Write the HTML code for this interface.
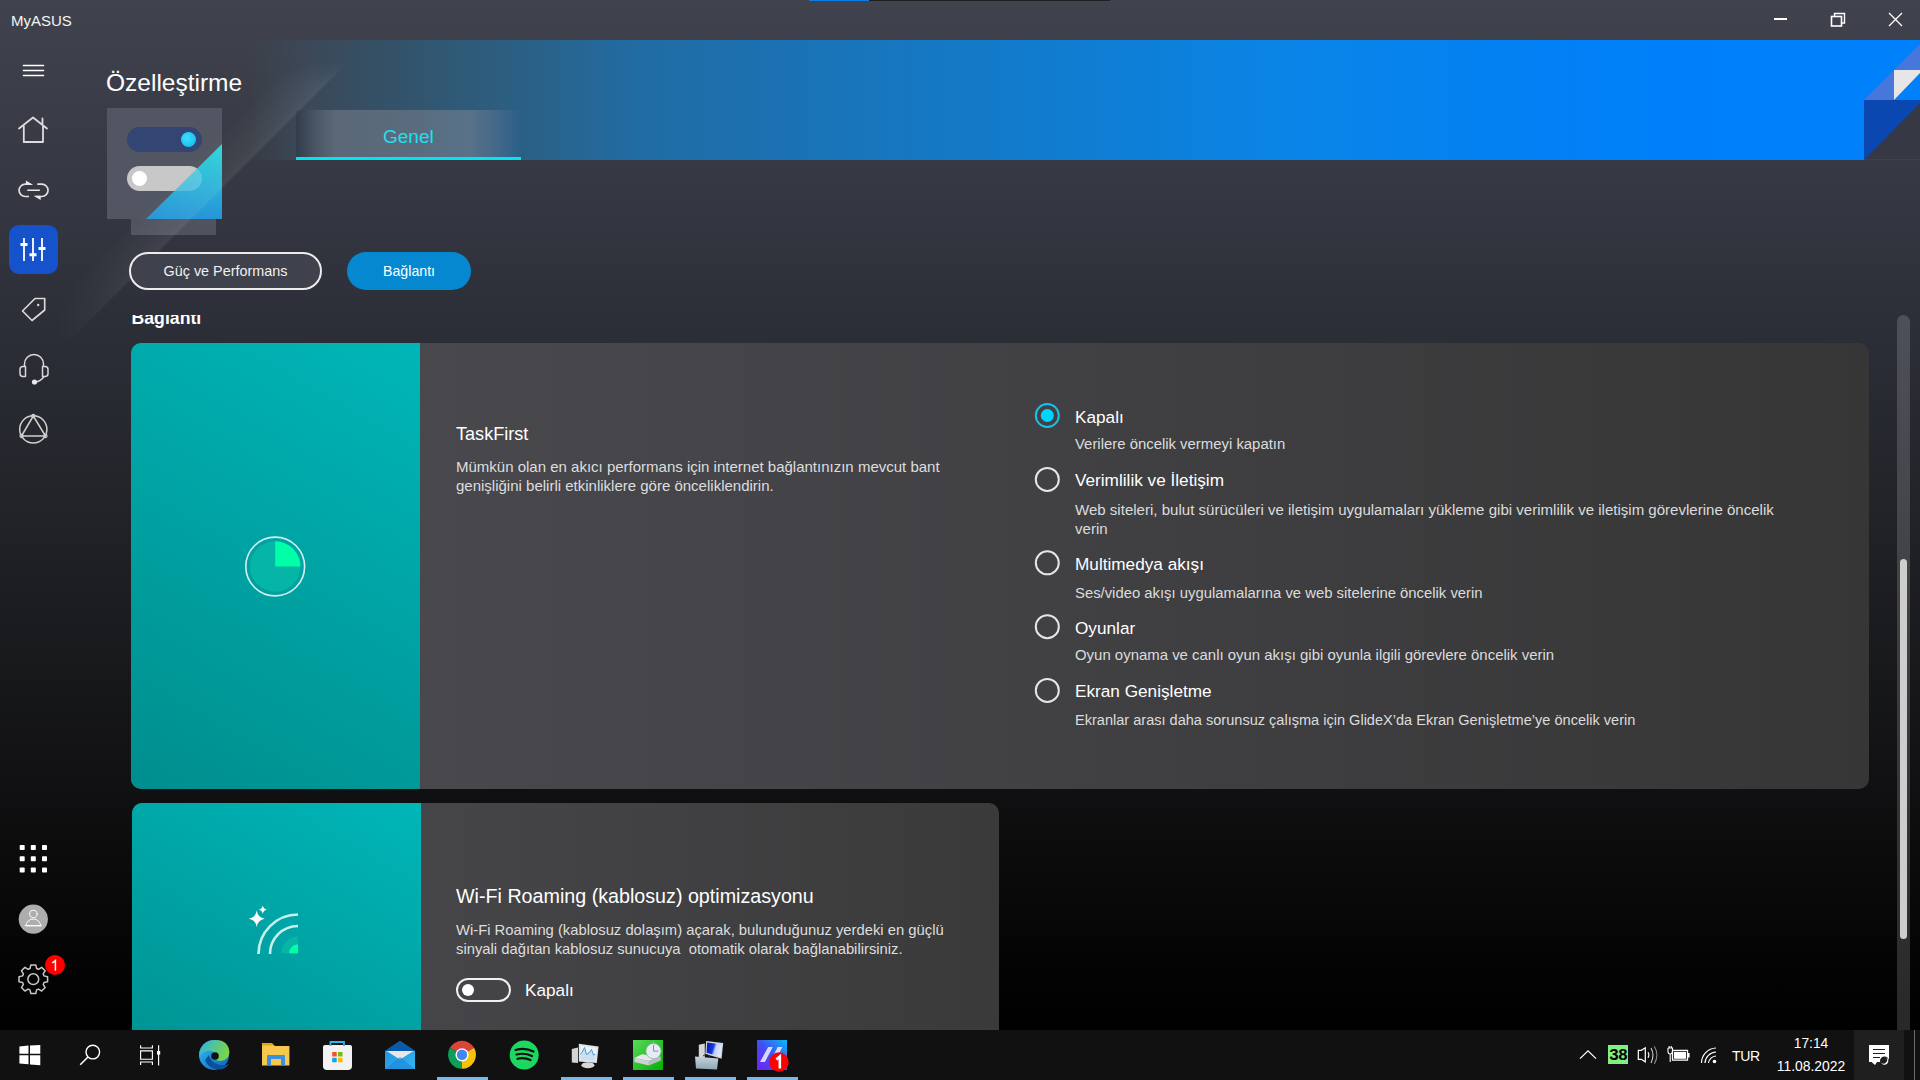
<!DOCTYPE html>
<html><head><meta charset="utf-8">
<style>
*{box-sizing:border-box;margin:0;padding:0}
html,body{width:1920px;height:1080px;overflow:hidden}
body{position:relative;font-family:"Liberation Sans",sans-serif;color:#fff;background:linear-gradient(180deg,#40434d 0px,#363943 180px,#2c2f38 320px,#1f2024 560px,#050505 950px,#000 1030px)}
.a{position:absolute}
.t{position:absolute;white-space:nowrap;line-height:1}
svg{position:absolute;overflow:visible}
</style></head><body>

<!-- top indicator -->
<div class="a" style="left:809px;top:0;width:60px;height:1.2px;background:#0a7ee8"></div>
<div class="a" style="left:869px;top:0;width:241px;height:1.2px;background:#1e1f22"></div>

<!-- title bar -->
<div class="t" style="left:11px;top:13px;font-size:15px;color:#f4f4f4">MyASUS</div>
<svg style="left:0;top:0" width="1920" height="40">
  <rect x="1774" y="18" width="13" height="2" fill="#fff"/>
  <rect x="1831.5" y="16.5" width="10" height="9.5" fill="none" stroke="#fff" stroke-width="1.6"/>
  <path d="M1834.5 16.5 V13.5 H1844.5 V23 H1841.5" fill="none" stroke="#fff" stroke-width="1.4"/>
  <path d="M1889 13 L1902 26 M1902 13 L1889 26" stroke="#fff" stroke-width="1.3"/>
</svg>


<!-- banner -->
<div class="a" style="left:250px;top:40px;width:1614px;height:120px;background:linear-gradient(90deg,rgba(64,66,76,0) 0px,#3c4756 50px,#33536a 150px,#2b6084 270px,#216ca4 390px,#1479c6 710px,#0a84e6 1030px,#0180f8 1350px,#0080fa 1614px)"></div>
<svg style="left:0;top:0" width="1920" height="1080">
  <rect x="1864" y="40" width="56" height="120" fill="#0080fa"/>
  <polygon points="1864,100 1920,44 1920,70 1894,70 1894,100" fill="#4677db"/>
  <polygon points="1894,70 1920,70 1920,73 1894,100" fill="#e6e6e6"/>
  <rect x="1864" y="100" width="56" height="60" fill="#0a47b0"/>
  <polygon points="1864,160 1920,103 1920,160" fill="#363943"/>
  <rect x="1864" y="159" width="56" height="1" fill="#2a4670"/>
</svg>
<!-- genel tab -->
<div class="a" style="left:296px;top:110px;width:225px;height:50px;background:linear-gradient(90deg,#323d4b 0px,#4a5666 20px,#5a6878 39px,#5a6c7e 120px,#587288 174px,#4a6a88 194px,#2a6088 225px)"></div>
<div class="a" style="left:296px;top:157px;width:225px;height:3px;background:#00e5ef"></div>
<div class="t" style="left:383px;top:126.6px;font-size:19px;color:#19e3ef">Genel</div>
<!-- title -->
<div class="t" style="left:106px;top:71px;font-size:24.5px;color:#fff">Özelleştirme</div>
<!-- illustration -->
<div class="a" style="left:131px;top:219px;width:85px;height:16px;background:#4f535f"></div>
<div class="a" style="left:107px;top:108px;width:115px;height:111px;background:#525663"></div>
<div class="a" style="left:127px;top:127px;width:75px;height:25px;border-radius:13px;background:#334573"></div>
<div class="a" style="left:181px;top:132px;width:15px;height:15px;border-radius:50%;background:radial-gradient(circle at 40% 40%,#3ae0ff,#12b4e8)"></div>
<div class="a" style="left:127px;top:166px;width:75px;height:25px;border-radius:13px;background:#c8c8c8"></div>
<div class="a" style="left:132px;top:171px;width:15px;height:15px;border-radius:50%;background:#fff"></div>
<svg style="left:0;top:0" width="400" height="300">
  <defs><linearGradient id="ig" x1="0" y1="0" x2="0" y2="1"><stop offset="0" stop-color="#2fd8d8"/><stop offset="1" stop-color="#2694d8"/></linearGradient></defs>
  <clipPath id="tri"><polygon points="222,144 222,219 146,219"/></clipPath>
  <polygon points="222,144 222,219 146,219" fill="url(#ig)"/>
  <rect x="127" y="166" width="75" height="25" rx="12.5" fill="#fff" opacity="0.2" clip-path="url(#tri)"/>
</svg>


<!-- light streak -->
<svg style="left:0;top:0" width="420" height="420">
  <defs>
    <linearGradient id="stk" gradientUnits="userSpaceOnUse" x1="175" y1="175" x2="205" y2="205"><stop offset="0" stop-color="#fff" stop-opacity="0"/><stop offset="0.8" stop-color="#fff" stop-opacity="0.055"/><stop offset="1" stop-color="#fff" stop-opacity="0.075"/></linearGradient>
    <linearGradient id="stkm" gradientUnits="userSpaceOnUse" x1="60" y1="350" x2="140" y2="270"><stop offset="0" stop-color="#fff" stop-opacity="0"/><stop offset="1" stop-color="#fff" stop-opacity="1"/></linearGradient>
    <mask id="stkmask"><rect x="0" y="0" width="420" height="420" fill="url(#stkm)"/></mask>
    <linearGradient id="stkv" gradientUnits="userSpaceOnUse" x1="0" y1="60" x2="0" y2="84"><stop offset="0" stop-color="#fff" stop-opacity="0"/><stop offset="1" stop-color="#fff" stop-opacity="1"/></linearGradient>
    <mask id="stkmask2"><rect x="0" y="0" width="420" height="420" fill="url(#stkv)"/></mask>
  </defs>
  <g mask="url(#stkmask2)"><polygon points="50,360 350,60 290,60 50,300" fill="url(#stk)" mask="url(#stkmask)"/></g>
</svg>
<!-- sidebar -->
<svg style="left:0;top:0" width="100" height="1030" fill="none" stroke="#e6e6e6" stroke-width="1.8" stroke-linecap="round" stroke-linejoin="round">
  <path d="M23.5 65.5 H43.5 M23.5 70.5 H43.5 M23.5 75.5 H43.5" stroke="#fff" stroke-width="1.6"/>
  <path d="M19 128.5 L33 117.5 L47 128.5 M23.8 126 V142 H43 V126 M42.5 118.5 V123.5" stroke="#dcdcdc" stroke-width="1.8"/>
  <path d="M31 184.2 H25.2 A6.15 6.15 0 0 0 25.2 196.5 H29 M37.2 184.2 H41.9 A6.15 6.15 0 0 1 41.9 196.5 H36" stroke="#e0e0e0" stroke-width="1.7" stroke-linecap="butt"/>
  <path d="M27.8 190.3 H39.3" stroke="#e8e8e8" stroke-width="1.6"/>
  <path d="M25.9 180.6 L33.2 184.9 H25.9 Z M40.7 200.1 L33.4 195.8 H40.7 Z" fill="#e8e8e8" stroke="none"/>
  <rect x="9" y="225" width="49" height="49" rx="10" fill="#1652cc" stroke="none"/>
  <path d="M24 238 V261 M33 238 V261 M42 238 V261" stroke="#fff" stroke-width="1.8" stroke-linecap="butt"/>
  <path d="M20.5 244.5 H27.5 M29.5 254.8 H36.5 M38.5 248.6 H45.5" stroke="#fff" stroke-width="3" stroke-linecap="butt"/>
  <path d="M35 298.5 H44.7 V310 L32 320.5 L22.5 311 Z" stroke="#d8d8d8" stroke-width="1.7"/>
  <circle cx="38.2" cy="305" r="1.2" fill="#d8d8d8" stroke="none"/>
  <path d="M24.5 366 V364 A9.5 9.5 0 0 1 43.5 364 V366" stroke="#d8d8d8" stroke-width="1.5"/>
  <path d="M25.5 366.5 H23 A3 3 0 0 0 20 369.5 V373.5 A3 3 0 0 0 23 376.5 H25.5 Z M42.5 366.5 H45 A3 3 0 0 1 48 369.5 V373.5 A3 3 0 0 1 45 376.5 H42.5 Z" stroke="#d8d8d8" stroke-width="1.5"/>
  <path d="M44 376.5 Q41 381 36 382" stroke="#d8d8d8" stroke-width="1.5"/>
  <circle cx="34.5" cy="382" r="2.6" fill="#e8e8e8" stroke="none"/>
  <circle cx="33.3" cy="429.3" r="13.6" stroke="#d0d0d0" stroke-width="1.5"/>
  <path d="M33.3 416 L21.5 436 H45.5 Z" stroke="#d0d0d0" stroke-width="1.5"/>
  <circle cx="33.3" cy="416" r="1.6" stroke="#d0d0d0" stroke-width="1.1"/>
  <circle cx="21.5" cy="436" r="1.6" stroke="#d0d0d0" stroke-width="1.1"/>
  <circle cx="45.5" cy="436" r="1.6" stroke="#d0d0d0" stroke-width="1.1"/>
  <g fill="#fff" stroke="none">
    <rect x="19.7" y="845" width="5" height="5" rx="0.8"/><rect x="30.8" y="845" width="5" height="5" rx="0.8"/><rect x="42" y="845" width="5" height="5" rx="0.8"/>
    <rect x="19.7" y="856.3" width="5" height="5" rx="0.8"/><rect x="30.8" y="856.3" width="5" height="5" rx="0.8"/><rect x="42" y="856.3" width="5" height="5" rx="0.8"/>
    <rect x="19.7" y="867.5" width="5" height="5" rx="0.8"/><rect x="30.8" y="867.5" width="5" height="5" rx="0.8"/><rect x="42" y="867.5" width="5" height="5" rx="0.8"/>
  </g>
  <circle cx="33.3" cy="919.2" r="14.6" fill="#adadad" stroke="none"/>
  <circle cx="33.3" cy="914" r="3.8" stroke="#fafafa" stroke-width="1"/>
  <path d="M26 925.5 A7.3 6.5 0 0 1 40.6 925.5 Z" stroke="#fafafa" stroke-width="1"/>
  <path d="M25 925.5 H41.5" stroke="#fafafa" stroke-width="1"/>
  <path id="gear" stroke="#c8c8c8" stroke-width="1.5" stroke-linejoin="round" d="M44.00 975.89 L47.59 976.75 L47.59 981.65 L44.00 982.51 L43.21 984.43 L45.14 987.57 L41.67 991.04 L38.53 989.11 L36.61 989.90 L35.75 993.49 L30.85 993.49 L29.99 989.90 L28.07 989.11 L24.93 991.04 L21.46 987.57 L23.39 984.43 L22.60 982.51 L19.01 981.65 L19.01 976.75 L22.60 975.89 L23.39 973.97 L21.46 970.83 L24.93 967.36 L28.07 969.29 L29.99 968.50 L30.85 964.91 L35.75 964.91 L36.61 968.50 L38.53 969.29 L41.67 967.36 L45.14 970.83 L43.21 973.97 Z"/>
  <circle cx="33.3" cy="979.2" r="5.4" stroke="#c8c8c8" stroke-width="1.5"/>
  <circle cx="55" cy="965" r="10" fill="#f00" stroke="none"/>
</svg>
<svg style="left:0;top:0" width="100" height="1080"><path d="M52.2 963 L55.4 960.6 V970.8" fill="none" stroke="#fff" stroke-width="1.5" stroke-linejoin="miter"/></svg>


<!-- buttons -->
<div class="a" style="left:129px;top:252px;width:193px;height:38px;border:2px solid #ececec;border-radius:19px;background:#3f424c"></div>
<div class="t" style="left:163.5px;top:264px;font-size:14.4px;color:#f0f0f0">Güç ve Performans</div>
<div class="a" style="left:347px;top:252px;width:124px;height:38px;border-radius:19px;background:#0588d0"></div>
<div class="t" style="left:383px;top:264px;font-size:14.2px;color:#fff">Bağlantı</div>

<!-- scroll content -->
<div class="a" style="left:0;top:315px;width:1895px;height:715px;overflow:hidden">
  <div class="t" style="left:131.5px;top:-5px;font-size:17.7px;font-weight:bold;color:#fff">Bağlantı</div>
  <!-- card 1 -->
  <div class="a" style="left:131px;top:28px;width:1738px;height:446px;border-radius:10px;overflow:hidden;background:linear-gradient(90deg,#4b4b50 0%,#444448 40%,#363636 100%)">
    <div class="a" style="left:0;top:0;width:289px;height:446px;background:linear-gradient(210deg,#00b6b8 0%,#00a2a3 50%,#008e8e 100%)"></div>
  </div>
  <svg style="left:0;top:0" width="600" height="700">
    <circle cx="275.2" cy="251.5" r="29.4" fill="none" stroke="#d2f0f0" stroke-width="1.6"/>
    <circle cx="275.2" cy="251.5" r="25.2" fill="#05b5a6"/>
    <path d="M275.2 251.5 V226.3 A25.2 25.2 0 0 1 300.4 251.5 Z" fill="#00ffa6"/>
  </svg>
  <div class="t" style="left:456px;top:110px;font-size:18.1px;color:#fff">TaskFirst</div>
  <div class="a" style="left:456px;top:141.8px;width:520px;font-size:15px;line-height:19.5px;color:#dedede">Mümkün olan en akıcı performans için internet bağlantınızın mevcut bant genişliğini belirli etkinliklere göre önceliklendirin.</div>

  <!-- radios -->
  <svg style="left:0;top:0" width="1200" height="500">
    <circle cx="1047.3" cy="100.5" r="11.5" fill="none" stroke="#14c3f0" stroke-width="2"/>
    <circle cx="1047.3" cy="100.5" r="6.5" fill="#00d4ff"/>
    <circle cx="1047.3" cy="164.4" r="11.5" fill="none" stroke="#e6e6e6" stroke-width="2"/>
    <circle cx="1047.3" cy="247.8" r="11.5" fill="none" stroke="#e6e6e6" stroke-width="2"/>
    <circle cx="1047.3" cy="311.7" r="11.5" fill="none" stroke="#e6e6e6" stroke-width="2"/>
    <circle cx="1047.3" cy="375.4" r="11.5" fill="none" stroke="#e6e6e6" stroke-width="2"/>
  </svg>
  <div class="t" style="left:1075px;top:94px;font-size:17.2px;color:#fff">Kapalı</div>
  <div class="t" style="left:1075px;top:122.2px;font-size:14.9px;color:#dcdcdc">Verilere öncelik vermeyi kapatın</div>
  <div class="t" style="left:1075px;top:156.7px;font-size:17.2px;color:#fff">Verimlilik ve İletişim</div>
  <div class="a" style="left:1075px;top:184.8px;width:720px;font-size:15.05px;line-height:19.5px;color:#dcdcdc">Web siteleri, bulut sürücüleri ve iletişim uygulamaları yükleme gibi verimlilik ve iletişim görevlerine öncelik verin</div>
  <div class="t" style="left:1075px;top:240.7px;font-size:17.2px;color:#fff">Multimedya akışı</div>
  <div class="t" style="left:1075px;top:270.8px;font-size:14.85px;color:#dcdcdc">Ses/video akışı uygulamalarına ve web sitelerine öncelik verin</div>
  <div class="t" style="left:1075px;top:305.2px;font-size:17.2px;color:#fff">Oyunlar</div>
  <div class="t" style="left:1075px;top:333.4px;font-size:14.95px;color:#dcdcdc">Oyun oynama ve canlı oyun akışı gibi oyunla ilgili görevlere öncelik verin</div>
  <div class="t" style="left:1075px;top:368.3px;font-size:17.2px;color:#fff">Ekran Genişletme</div>
  <div class="t" style="left:1075px;top:397.8px;font-size:14.55px;color:#dcdcdc">Ekranlar arası daha sorunsuz çalışma için GlideX’da Ekran Genişletme’ye öncelik verin</div>

  <!-- card 2 -->
  <div class="a" style="left:132px;top:488px;width:867px;height:300px;border-radius:10px;overflow:hidden;background:linear-gradient(90deg,#4b4b50 0%,#434346 50%,#3a3a3a 100%)">
    <div class="a" style="left:0;top:0;width:289px;height:300px;background:linear-gradient(210deg,#00b6b8 0%,#00a2a3 50%,#008e8e 100%)"></div>
  </div>
  <svg style="left:0;top:0" width="600" height="700">
    <path d="M298 599.5 A39.5 39.5 0 0 0 258.5 639" fill="none" stroke="#c9eeee" stroke-width="2.6"/>
    <path d="M298 611 A28 28 0 0 0 270 639" fill="none" stroke="#c9eeee" stroke-width="2.6"/>
    <path d="M298 638.3 V621.5 A16.8 16.8 0 0 0 281.2 638.3 Z" fill="#05b5a6"/>
    <path d="M298 638.3 V629.3 A9 9 0 0 0 289 638.3 Z" fill="#00ffa6"/>
    <path d="M256.7 595.5 Q257.8 602.5 264.8 603.7 Q257.8 604.9 256.7 611.9 Q255.6 604.9 248.6 603.7 Q255.6 602.5 256.7 595.5 Z" fill="#fff"/>
    <path d="M262.8 590.6 Q263.4 594.2 267 594.8 Q263.4 595.4 262.8 599 Q262.2 595.4 258.6 594.8 Q262.2 594.2 262.8 590.6 Z" fill="#fff"/>
  </svg>
  <div class="t" style="left:456px;top:572.3px;font-size:19.7px;color:#fff">Wi-Fi Roaming (kablosuz) optimizasyonu</div>
  <div class="a" style="left:456px;top:606.4px;width:520px;font-size:14.8px;line-height:19px;color:#dedede">Wi-Fi Roaming (kablosuz dolaşım) açarak, bulunduğunuz yerdeki en güçlü sinyali dağıtan kablosuz sunucuya&nbsp; otomatik olarak bağlanabilirsiniz.</div>
  <div class="a" style="left:456px;top:662.5px;width:55px;height:24.5px;border:2px solid #f0f0f0;border-radius:13px"></div>
  <div class="a" style="left:462.4px;top:668.7px;width:12px;height:12px;border-radius:50%;background:#fff"></div>
  <div class="t" style="left:525px;top:667.4px;font-size:17.2px;color:#fff">Kapalı</div>
</div>

<!-- scrollbar -->
<div class="a" style="left:1897px;top:315px;width:13px;height:715px;border-radius:6.5px 6.5px 0 0;background:rgba(255,255,255,0.16)"></div>
<div class="a" style="left:1900px;top:559px;width:7px;height:380px;border-radius:3.5px;background:#cdcdcd"></div>


<!-- taskbar -->
<div class="a" style="left:0;top:1030px;width:1920px;height:50px;background:#111111"></div>
<div class="a" style="left:1854px;top:1030px;width:50px;height:50px;background:#1f1f1f"></div>
<div class="a" style="left:1914px;top:1030px;width:1px;height:50px;background:#6a6a6a"></div>
<svg style="left:0;top:1030px" width="1920" height="50">
  <!-- windows logo -->
  <path d="M19.4 16.6 L28.5 15.6 V23.7 H19.4 Z M30 15.4 L40.3 14.9 V23.7 H30 Z M19.4 25.2 H28.5 V34.3 L19.4 33.5 Z M30 25.2 H40.3 V35.2 L30 34.5 Z" fill="#fff"/>
  <!-- search -->
  <circle cx="92.8" cy="22.1" r="6.8" fill="none" stroke="#fff" stroke-width="1.4"/>
  <path d="M88 27 L80.2 34.8" stroke="#fff" stroke-width="1.5"/>
  <!-- task view -->
  <path d="M140.6 15.3 V18 H152.4 V15.3 M140.6 35 V32 H152.4 V35 M140.6 20.8 H152.4 V29.2 H140.6 Z M158.6 15.3 V35.5" fill="none" stroke="#fff" stroke-width="1.15"/>
  <rect x="157" y="21" width="3.2" height="3.6" fill="#fff"/>
  <!-- edge -->
  <defs>
    <linearGradient id="edg1" x1="0" y1="0" x2="1" y2="1"><stop offset="0" stop-color="#35c1f1"/><stop offset="0.6" stop-color="#1a85d8"/><stop offset="1" stop-color="#0f5fb3"/></linearGradient>
    <linearGradient id="edg2" x1="0" y1="0" x2="1" y2="0.3"><stop offset="0" stop-color="#2bb3e8"/><stop offset="1" stop-color="#7ad44a"/></linearGradient>
    <linearGradient id="mail" x1="0" y1="0" x2="1" y2="1"><stop offset="0" stop-color="#1d8ee0"/><stop offset="1" stop-color="#36b4ee"/></linearGradient>
    <linearGradient id="asus" x1="0" y1="1" x2="1" y2="0"><stop offset="0" stop-color="#6a3cf0"/><stop offset="1" stop-color="#1ea0f5"/></linearGradient>
  </defs>
  <circle cx="214" cy="25" r="15" fill="url(#edg1)"/>
  <path d="M199.5 22 Q203 10 216 10 Q228 10 229.5 22 Q229 30 221 31 Q215 31 213 27 Q216 23 212 21 Q205 20 199.5 26 Z" fill="url(#edg2)"/>
  <circle cx="215" cy="26" r="3.8" fill="#111"/>
  <path d="M205 30 Q208 39 220 39.5 Q226 39 229 34 Q222 37 215 33 Q210 30 209 25 Z" fill="#0c4f9a"/>
  <!-- explorer -->
  <path d="M262 13.5 H272 L275 16 H289.4 V35.6 H262 Z" fill="#f6c94e"/>
  <path d="M262 13 H272 L274 15.5 H262 Z" fill="#e2a516"/>
  <path d="M267 35.5 V26 Q267 25 268 25 H284 Q285 25 285 26 V35.5 H281 V29 H271 V35.5 Z" fill="#3a8fe0"/>
  <!-- store -->
  <path d="M325 15 H350 Q352 15 352 17 V36 Q352 40 348 40 H327 Q323 40 323 36 V17 Q323 15 325 15 Z" fill="#f2f2f2"/>
  <path d="M330.5 16 V12 H344 V16" fill="none" stroke="#2fb6f0" stroke-width="1.8"/>
  <rect x="332.2" y="22" width="4.5" height="4.5" fill="#f0532c"/><rect x="338" y="22" width="4.5" height="4.5" fill="#7cba0d"/>
  <rect x="332.2" y="27.8" width="4.5" height="4.5" fill="#10a4ee"/><rect x="338" y="27.8" width="4.5" height="4.5" fill="#ffb900"/>
  <!-- mail -->
  <path d="M385 21 L400 11 L415 21 V39 H385 Z" fill="url(#mail)"/>
  <path d="M385 21 L400 11 L415 21 Z" fill="#0a5aab"/>
  <path d="M386.5 21 H413.5 L400 29.5 Z" fill="#e8e8e8"/>
  <path d="M385 39 L400 27 L415 39 Z" fill="#1b86d8" opacity="0.6"/>
  <!-- chrome -->
  <path d="M462 24.8 L449.88 17.8 A14 14 0 0 1 474.12 17.8 Z" fill="#db4437"/>
  <path d="M462 24.8 L474.12 17.8 A14 14 0 0 1 462 38.8 Z" fill="#f4c20d"/>
  <path d="M462 24.8 L462 38.8 A14 14 0 0 1 449.88 17.8 Z" fill="#0f9d58"/>
  <circle cx="462" cy="24.8" r="6.6" fill="#fff"/>
  <circle cx="462" cy="24.8" r="5.2" fill="#4285f4"/>
  <!-- spotify -->
  <circle cx="524.2" cy="25" r="14.5" fill="#1ed760"/>
  <path d="M515.5 20 Q525 17 533.5 21.5 M516.5 24.5 Q524.5 22.5 532 26 M517.5 28.8 Q524 27.2 530.5 30" fill="none" stroke="#111" stroke-width="2.2" stroke-linecap="round"/>
  <!-- perfmon -->
  <defs>
    <linearGradient id="grn" x1="0" y1="0" x2="1" y2="1"><stop offset="0" stop-color="#5ad85a"/><stop offset="1" stop-color="#00b000"/></linearGradient>
    <linearGradient id="scr" x1="0" y1="0" x2="1" y2="0.3"><stop offset="0" stop-color="#0010c0"/><stop offset="0.5" stop-color="#1a3ae0"/><stop offset="0.65" stop-color="#c0d0ff"/><stop offset="1" stop-color="#e0e8ff"/></linearGradient>
    <linearGradient id="tbx" x1="0" y1="0" x2="0" y2="1"><stop offset="0" stop-color="#c5d3dc"/><stop offset="1" stop-color="#8ea6b4"/></linearGradient>
  </defs>
  <path d="M571.8 19 L578 17.5 V33 L571.8 32.5 Z" fill="#d4d4d4"/>
  <path d="M578.8 13.8 L598.6 16.4 L596.8 33 L578.8 31.5 Z" fill="#e2e2e2"/>
  <path d="M580.3 15.8 L596.8 18 L595.4 31 L580.3 29.8 Z" fill="#eaf3fa"/>
  <path d="M580.3 24 L582 22.5 L584.5 17.5 L586.5 24.5 L589 23 L591.5 19.5 L593.5 25 L595.4 24.5 V31 L580.3 29.8 Z" fill="#c8e0f2"/>
  <path d="M580.3 24 L582 22.5 L584.5 17.5 L586.5 24.5 L589 23 L591.5 19.5 L593.5 25 L595.4 24.5" fill="none" stroke="#3b8fd0" stroke-width="0.9"/>
  <ellipse cx="587.9" cy="35.2" rx="6.5" ry="3" fill="#d8d8d8"/>
  <!-- green disk -->
  <rect x="633" y="10" width="30" height="30" fill="url(#grn)"/>
  <path d="M634.3 27.9 L642 24.2 L660.8 26.8 L648.9 31 Z" fill="#e8e8ec"/>
  <path d="M634.3 27.9 L648.9 31 V35.5 L634.5 32 Z" fill="#cfd0d8"/>
  <path d="M648.9 31 L660.8 26.8 V30.5 L648.9 35.5 Z" fill="#b8bcc4"/>
  <circle cx="653.5" cy="21.1" r="7.6" fill="#e6edf2" stroke="#9aa6ae" stroke-width="0.8"/>
  <path d="M653.5 21.1 L658.5 21.1 M653.5 21.1 V15" stroke="#5a6a78" stroke-width="0.7"/>
  <rect x="652.7" y="11" width="1.6" height="2.6" fill="#9aa6ae"/>
  <!-- toolbox -->
  <path d="M698.8 14.7 L704.8 13.5 V28 H698.8 Z" fill="#d6d6d6"/>
  <path d="M706.1 10.9 L723.2 13 L721.6 28.8 L705.3 23.9 Z" fill="#d0d4d8"/>
  <path d="M707.2 12.6 L721.8 14.4 L720.6 27 L706.6 22.8 Z" fill="url(#scr)"/>
  <path d="M695 26.6 L718.3 28.5 L717 39.6 L696 38.5 Z" fill="url(#tbx)"/>
  <path d="M703 26 Q707 22.5 710 27" fill="none" stroke="#333" stroke-width="1"/>
  <!-- myasus -->
  <defs><linearGradient id="asus2" x1="0" y1="1" x2="1" y2="0"><stop offset="0" stop-color="#7420f8"/><stop offset="0.5" stop-color="#4050f0"/><stop offset="1" stop-color="#0ab8f8"/></linearGradient></defs>
  <rect x="757" y="10" width="30" height="30" fill="url(#asus2)"/>
  <path d="M760 32 L764.9 32 L772.8 17.1 L768.2 17.1 Z" fill="#e8e8ff" opacity="0.9"/>
  <path d="M770 32 L774.9 32 L782.3 17.1 L777.7 17.1 Z" fill="#e8e8ff" opacity="0.9"/>
  <circle cx="779" cy="32" r="9.7" fill="#f00"/>
  <!-- underlines -->
  <g fill="#76b9ed">
    <rect x="437" y="47" width="51" height="3"/><rect x="561" y="47" width="51" height="3"/><rect x="623" y="47" width="51" height="3"/><rect x="685" y="47" width="51" height="3"/><rect x="747" y="47" width="51" height="3"/>
  </g>
  <!-- tray -->
  <path d="M1580 28.6 L1588 20.8 L1596 28.6" fill="none" stroke="#fff" stroke-width="1.3"/>
  <rect x="1608" y="15" width="20" height="19" fill="#80f080"/>
  <path d="M1638.3 20.3 H1641.3 L1645.3 17.8 V31.8 L1641.3 29.3 H1638.3 Z" fill="none" stroke="#fff" stroke-width="1.2"/>
  <path d="M1648 22.3 Q1649.8 25 1648 27.7" fill="none" stroke="#fff" stroke-width="1.1"/>
  <path d="M1651 18 Q1655 25 1651 33" fill="none" stroke="#d0d0d0" stroke-width="1.1"/>
  <path d="M1654.3 16.3 Q1659.5 25 1654.3 34" fill="none" stroke="#8a8a8a" stroke-width="1.1"/>
  <path d="M1672.5 20.3 H1687.5 V30.2 H1672.5 Z" fill="none" stroke="#fff" stroke-width="1.3"/>
  <rect x="1674" y="21.8" width="12" height="7" fill="#fff"/>
  <rect x="1688" y="23" width="1.6" height="4.5" fill="#fff"/>
  <path d="M1668 18 V21.5 Q1668 24 1670.2 24 Q1672.5 24 1672.5 21.5 V18 H1668 M1669.2 18 V16 M1671.3 18 V16 M1670.2 24 V32" fill="none" stroke="#fff" stroke-width="1.1"/>
  <path d="M1701.5 33 A15 15 0 0 1 1716 18 M1705 33 A11.5 11.5 0 0 1 1716 22 M1708.5 33 A8 8 0 0 1 1716 26" fill="none" stroke="#fff" stroke-width="1.2"/>
  <circle cx="1714.5" cy="31.5" r="1.8" fill="#fff"/>
  <!-- action center -->
  <path d="M1869 15 H1889 V32 H1877 L1875 35 L1871.5 32 H1869 Z" fill="#fff"/>
  <path d="M1873 19.5 H1885 M1873 23.5 H1885 M1873 27.5 H1880" stroke="#1f1f1f" stroke-width="1"/>
  <circle cx="1884.5" cy="31" r="4.5" fill="#1f1f1f"/>
  <path d="M1886 27.5 A3.8 3.8 0 1 1 1881 32.5 A3 3 0 0 0 1886 27.5 Z" fill="#fff"/>
</svg>
<div class="t" style="left:1609px;top:1047.5px;font-size:16.5px;font-family:'Liberation Mono',monospace;font-weight:bold;color:#000;letter-spacing:-0.8px">38</div>
<svg style="left:0;top:0" width="800" height="1080"><path d="M776.3 1059.6 L779.8 1056.6 V1068.6" fill="none" stroke="#fff" stroke-width="2.6" stroke-linejoin="miter"/></svg>
<div class="t" style="left:1732px;top:1049px;font-size:14px;color:#fff;letter-spacing:-0.3px">TUR</div>
<div class="t" style="left:1761px;top:1037.2px;width:100px;text-align:center;font-size:13.8px;color:#fff">17:14</div>
<div class="t" style="left:1761px;top:1059.8px;width:100px;text-align:center;font-size:13.9px;color:#fff">11.08.2022</div>



</body></html>
